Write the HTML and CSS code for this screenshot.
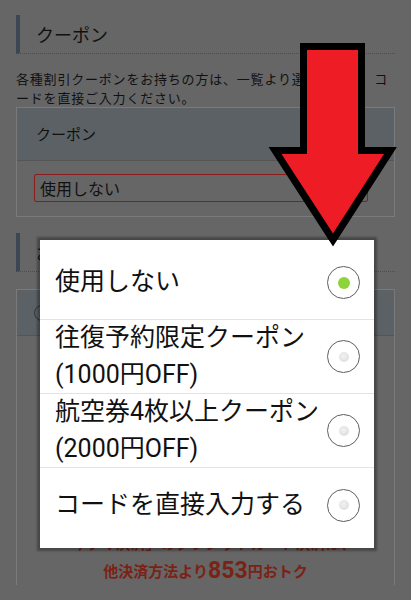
FILE: index.html
```html
<!DOCTYPE html>
<html lang="ja">
<head>
    <meta charset="UTF-8">
    <meta name="viewport" content="width=device-width, initial-scale=1.0">
    <title>クーポン選択</title>
    <link rel="stylesheet" href="styles.css">
</head>
<body>

    <div class="page">
        <!-- Coupon section -->
        <h2 class="sec-title">クーポン</h2>
        <p class="desc">各種割引クーポンをお持ちの方は、一覧より選択するか、コードを直接ご入力ください。</p>

        <div class="coupon-table">
            <div class="table-head">クーポン</div>
            <div class="table-body">
                <div class="fake-select">使用しない</div>
            </div>
        </div>

        <!-- Payment section -->
        <h2 class="sec-title sec-title-2">お支払い方法</h2>
        <div class="pay-box">
            <div class="pay-head">
                <span class="pay-radio"></span>
            </div>
            <div class="pay-body">
                <div class="pay-info"></div>
                <p class="notice">「今すぐ決済」のクレジットカード決済は、<br>他決済方法より<span class="notice-num">853</span>円おトク</p>
            </div>
        </div>
    </div>

    <!-- Picker dialog -->
    <div class="dialog">
        <div class="option">
            <span class="option-label">使用しない</span>
            <span class="radio checked"></span>
        </div>
        <div class="option">
            <span class="option-label">往復予約限定クーポン<br>(1000円OFF)</span>
            <span class="radio"></span>
        </div>
        <div class="option">
            <span class="option-label">航空券4枚以上クーポン<br>(2000円OFF)</span>
            <span class="radio"></span>
        </div>
        <div class="option">
            <span class="option-label">コードを直接入力する</span>
            <span class="radio"></span>
        </div>
    </div>

    <!-- Annotation arrow -->
    <svg class="arrow" width="411" height="260" viewBox="0 0 411 260">
        <polygon points="303.5,46.5 361.5,46.5 361.5,150.5 390.5,150.5 333,240 275,150.5 303.5,150.5"
                 fill="#ee1c25" stroke="#000" stroke-width="7" stroke-linejoin="miter"/>
    </svg>

</body>
</html>
```

FILE: styles.css
```css
body {
    margin: 0;
    background-color: #666;
    font-family: "Noto Sans CJK JP", "Noto Sans", sans-serif;
    color: #111;
    height: 600px;
    overflow: hidden;
}

.page {
    padding: 15px 16px 0 16px;
}

/* Section headings */
.sec-title {
    margin: 0;
    height: 38px;
    line-height: 38px;
    padding-left: 16px;
    border-left: 4px solid #3c4654;
    border-bottom: 1px dotted #4c4c4c;
    font-size: 18px;
    font-weight: normal;
}
.sec-title-2 {
    margin-top: 16px;
}

.desc {
    margin: 15px 0 0 0;
    font-size: 13px;
    letter-spacing: 0.8px;
    line-height: 19px;
}

/* Coupon table */
.coupon-table {
    border: 1px solid #7a7a7a;
}
.table-head {
    height: 52px;
    line-height: 52px;
    padding-left: 19px;
    background-color: #5b6165;
    border-bottom: 1px solid #555;
    font-size: 15px;
}
.table-body {
    padding: 13px 17px 14px 17px;
}
.fake-select {
    width: 334px;
    height: 28px;
    box-sizing: border-box;
    border: 1px solid #8a1c1c;
    border-radius: 2px;
    padding-left: 5px;
    line-height: 26px;
    font-size: 16px;
}

/* Payment box (mostly hidden by the dialog) */
.pay-box {
    margin-top: 17px;
    border: 1px solid #7a7a7a;
    border-bottom: none;
}
.pay-head {
    display: flex;
    align-items: center;
    height: 45px;
    padding-left: 17px;
    background-color: #5b6165;
    border-bottom: 1px solid #555;
}
.pay-radio {
    width: 14px;
    height: 14px;
    border: 1px solid #333;
    border-radius: 50%;
}
.pay-body {
    padding: 16px 19px 0 19px;
}
.pay-info {
    min-height: 177px;
}
.notice {
    margin: 0;
    text-align: center;
    font-size: 15px;
    line-height: 28px;
    font-weight: bold;
    color: #7a2315;
}
.notice-num {
    font-family: Roboto, "Noto Sans", sans-serif;
    font-size: 23px;
    vertical-align: -1px;
}

/* Picker dialog */
.dialog {
    position: absolute;
    top: 240px;
    left: 40px;
    width: 334px;
    padding: 6px 0;
    box-sizing: border-box;
    background-color: #fff;
    box-shadow: 0 0 2px 3px rgba(0, 0, 0, 0.3);
    font-family: Roboto, "Noto Sans CJK JP", sans-serif;
    color: #111;
}
.option {
    display: flex;
    align-items: center;
    justify-content: space-between;
    min-height: 74px;
    box-sizing: border-box;
    padding: 0 14px 0 15px;
    border-bottom: 1px solid #e3e3e3;
}
.option:last-child {
    border-bottom: none;
}
.option-label {
    font-size: 25px;
    line-height: 36.5px;
}
.radio {
    flex-shrink: 0;
    width: 33px;
    height: 33px;
    box-sizing: border-box;
    border: 1.5px solid #5e5e5e;
    border-radius: 50%;
    display: flex;
    align-items: center;
    justify-content: center;
}
.radio::after {
    content: "";
    width: 10px;
    height: 10px;
    border-radius: 50%;
    background: radial-gradient(circle at 45% 40%, #f2f2f2, #d8d8d8);
}
.radio.checked::after {
    width: 12px;
    height: 12px;
    background: #8cd43a;
}

/* Red annotation arrow drawn over the screenshot */
.arrow {
    position: absolute;
    top: 0;
    left: 0;
    pointer-events: none;
}
```
